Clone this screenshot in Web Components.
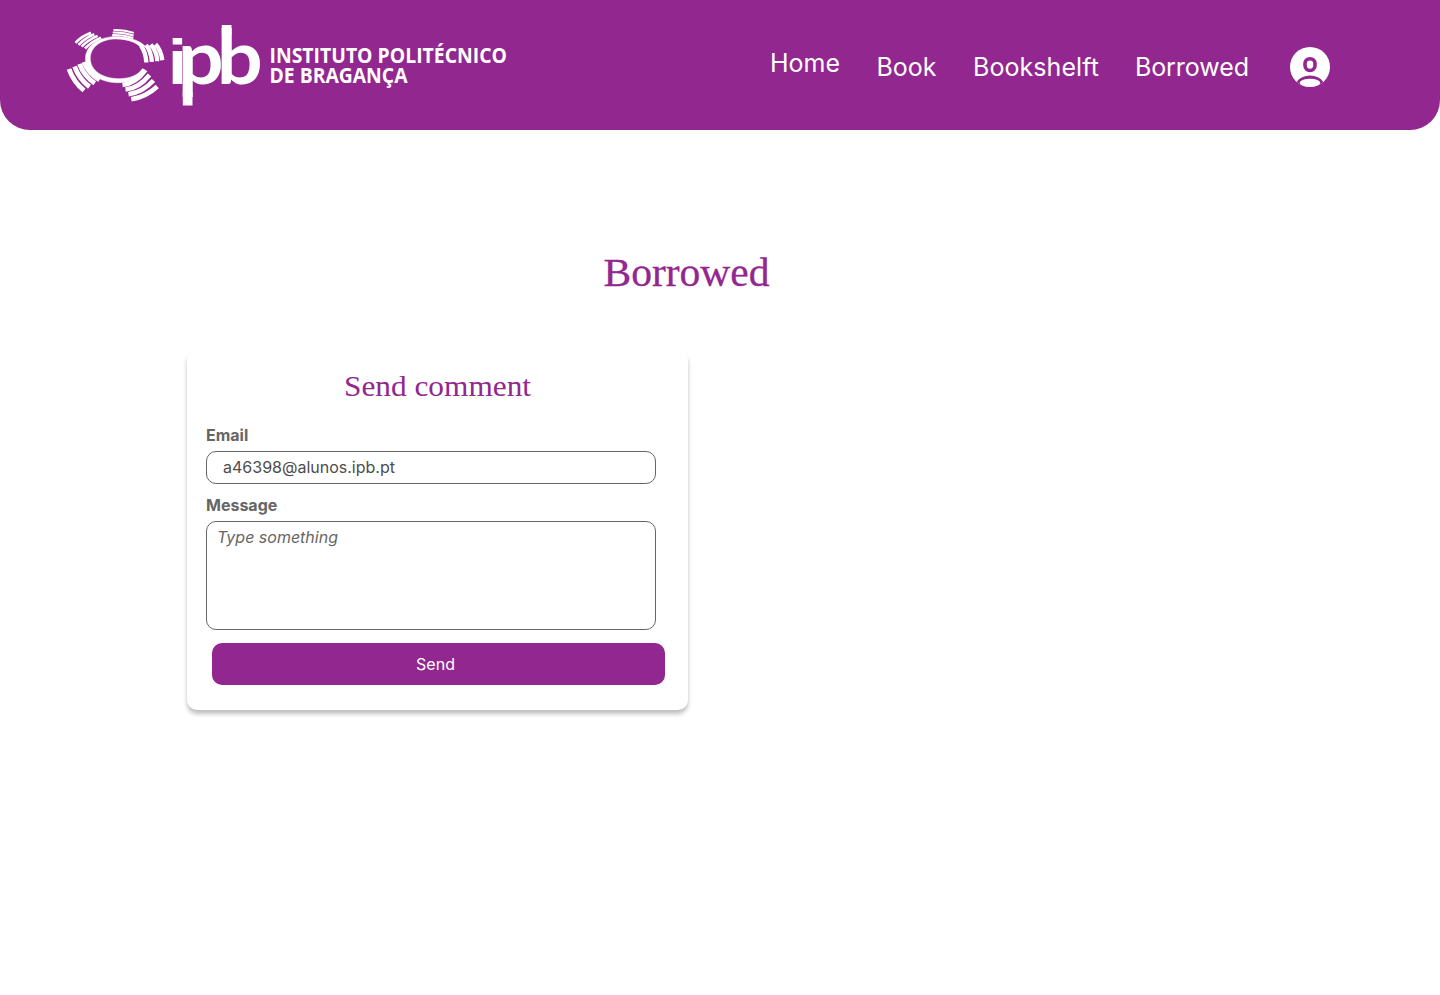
<!DOCTYPE html>
<html lang="en"><head><meta charset="utf-8"><title>Borrowed</title>
<style>body{margin:0;background:#fff;font-family:Inter,sans-serif}</style></head>
<body>
<library-app></library-app>
<script>
const define=(name,html)=>{const t=document.createElement('template');t.innerHTML=html;
customElements.define(name,class extends HTMLElement{constructor(){super();this.attachShadow({mode:'open'}).append(t.content.cloneNode(true));}});};

define('ipb-logo',`<style>:host{display:block;width:450px;height:110px}svg{display:block;overflow:visible}</style>
<svg width="450" height="110" viewBox="60 0 450 110" fill="#fff">
<path fill-rule="evenodd" stroke="#fff" stroke-width=".5" d="M145 46C139 40 128 36.700 116 36.700C98 36.700 85.500 46 85.500 58.500C85.500 72 99 82.700 118 82.700C131 82.700 141 78 145 71L142.500 68.500C138.500 75 130 78.700 119 78.700C102 78.700 90.300 70 90.300 58.500C90.300 47 101 39 116 39C128 39 137 42.500 141 48Z"/>
<g fill="none" stroke="#fff">
<g stroke-width="2.600"><path d="M75.500 42.800Q82 36 91 32.800M78.500 44.900Q85 38 94.300 34.200M81.600 46.700Q88 40 97.600 35.900M85 48.500Q91 42 101 37.600"/></g>
<g stroke-width="2"><path d="M113.500 30Q124 29.500 133.800 32.900M112.800 32.500Q123 32 133.600 35.500M112.200 35Q123 34.500 133.300 38M111.600 37.500Q122 36.800 132.500 40.500"/></g>
<g stroke-width="4.300"><path d="M141 45.500Q146 53 146.300 62.500M146 45Q151.300 52 151.900 61.800M150.800 44.500Q157 52 157.300 61.200M155.500 44.200Q161 50 162.300 60.200"/></g>
<g stroke-width="4.800"><path d="M69 69Q73.500 82 84 90.500M74.600 66.500Q79 79 89.500 86.800M79.500 64Q84 76 94.800 83.200M84 62Q88 73 99.500 80"/></g>
<g stroke-width="4.500"><path d="M122.500 85Q136 83.500 145.500 70M125.500 89.600Q139 88 149.500 75M128.500 94.300Q143 92 153.500 80.500M131.300 99.300Q146 97 157.300 86.500"/></g>
</g>
<rect x="182.800" y="92" width="9.700" height="13.500"/><rect x="221.800" y="25" width="9.700" height="10"/>
<text transform="scale(1.08 1)" y="84" font-family="Lato" font-weight="700" font-size="75" x="155.500 164.600 200.600"><tspan font-family="Liberation Sans" font-size="63">i</tspan>pb</text>
<text font-family="Open Sans" font-weight="700" font-size="21"><tspan x="269.500" y="62.500" textLength="237.500" lengthAdjust="spacingAndGlyphs">INSTITUTO POLITÉCNICO</tspan><tspan x="269.500" y="83.200" textLength="138" lengthAdjust="spacingAndGlyphs">DE BRAGANÇA</tspan></text>
</svg>`);

define('nav-link',`<style>:host{display:block;font:400 25px/32px Inter,sans-serif;letter-spacing:var(--track,0);color:#fff;white-space:nowrap}</style><slot></slot>`);

define('user-avatar',`<style>:host{display:block;width:40px;height:40px}svg{display:block}</style>
<svg width="40" height="40" viewBox="0 0 40 40"><defs><clipPath id="c"><circle cx="20" cy="20" r="20"/></clipPath></defs>
<g clip-path="url(#c)"><rect width="40" height="40" fill="#fff"/><rect x="15" y="11.700" width="10" height="11.800" rx="4.900" fill="none" stroke="#92278f" stroke-width="3.600"/>
<path d="M0 40L6.500 35Q11 28.500 20 28.500T33.500 35L40 40Z" fill="#92278f"/><ellipse cx="20" cy="36" rx="10.300" ry="4.200" fill="#fff"/></g></svg>`);

define('site-header',`<style>:host{display:flex;box-sizing:border-box;height:130px;padding:0 110px 0 60px;background:#92278f;border-radius:0 0 30px 30px}
nav{display:flex;margin-left:auto;padding-top:47px;align-items:flex-start}
nav-link{margin-top:4px}nav-link:first-child{margin-top:0}.a{margin-right:36.500px}.b{margin-right:36px;--track:.06px}.l{margin-right:41px;--track:-.06px}</style>
<ipb-logo></ipb-logo><nav><nav-link class="a">Home</nav-link><nav-link class="a">Book</nav-link><nav-link class="b">Bookshelft</nav-link><nav-link class="l">Borrowed</nav-link><user-avatar></user-avatar></nav>`);

define('page-title',`<style>:host{display:block}h1,svg{display:block;margin:0}svg{overflow:visible}</style>
<h1><svg width="180" height="60" viewBox="0 0 180 60"><text x="3.500" y="46" font-family="Liberation Serif" font-weight="400" font-size="40" fill="#92278f" stroke="#92278f" stroke-width=".3" textLength="166" lengthAdjust="spacingAndGlyphs">Borrowed</text></svg></h1>`);

define('form-field',`<style>:host{display:block}.label{font:700 16px/20px Inter,sans-serif;color:#666}
.box{box-sizing:border-box;width:450px;height:var(--field-height,33px);margin-top:6px;border:1px solid #666;border-radius:10px;padding:5px var(--field-pad,16px);font:var(--field-style,normal) 400 16px/20px Inter,sans-serif;color:var(--field-color,#4d4d4d)}</style>
<div class="label"><slot name="label"></slot></div><div class="box"><slot></slot></div>`);

define('send-button',`<style>:host{display:block}button{display:block;width:453px;height:42px;border:0;border-radius:10px;background:#92278f;color:#fff;font:400 16px/20px Inter,sans-serif;padding:0 6px 0 0}</style><button><slot></slot></button>`);

define('comment-card',`<style>:host{display:block;box-sizing:border-box;width:501px;height:360px;padding:15px 19px 0;border-radius:10px;background:#fff;box-shadow:0 4px 4px rgba(0,0,0,.25)}
h2,svg{display:block;margin:0}svg{margin-left:131px;overflow:visible}
.email{margin-top:10px}.message{margin-top:11px;--field-height:109px;--field-pad:10px;--field-style:italic;--field-color:#666}send-button{margin:13px 0 0 6px}</style>
<h2><svg width="200" height="50" viewBox="0 0 200 50"><text x="7" y="31.300" font-family="Liberation Serif" font-size="30" font-weight="400" fill="#92278f" textLength="187" lengthAdjust="spacingAndGlyphs">Send comment</text></svg></h2>
<form-field class="email"><span slot="label">Email</span>a46398@alunos.ipb.pt</form-field>
<form-field class="message"><span slot="label">Message</span>Type something</form-field>
<send-button>Send</send-button>`);

define('library-app',`<style>:host{display:block;height:995px}page-title{margin:110px 0 0 600px}comment-card{margin:50px 0 0 187px}</style>
<site-header></site-header><page-title></page-title><comment-card></comment-card>`);
</script></body></html>
